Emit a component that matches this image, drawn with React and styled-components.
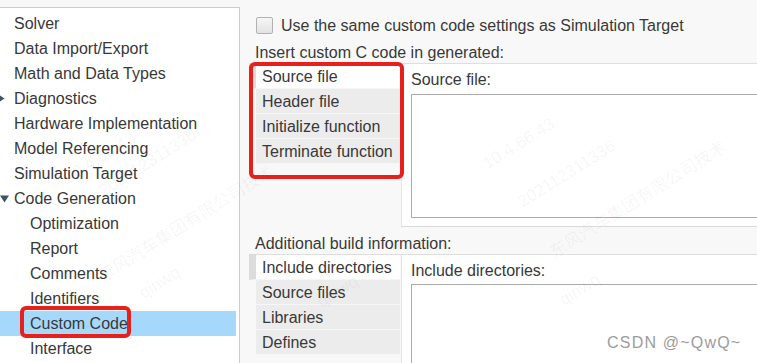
import React from 'react';
import styled, { createGlobalStyle } from 'styled-components';

const Global = createGlobalStyle`
  html, body { margin: 0; padding: 0; }
  body {
    width: 757px; height: 363px; overflow: hidden;
    background: #f8f8f8;
    font-family: "Liberation Sans", Arial, sans-serif;
    font-size: 16px; color: #383838;
  }
`;

const Page = styled.div`
  position: relative;
  display: flex;
  width: 757px;
  height: 363px;
  overflow: hidden;
`;

const Sidebar = styled.nav`
  flex: none;
  width: 236px;
  margin-top: 7px;
  padding: 3px 3px 0 0;
  background: #fff;
  border-top: 1px solid #cdcdcd;
  border-right: 1px solid #cdcdcd;
`;

const TreeRow = styled.div`
  position: relative;
  display: flex;
  align-items: center;
  height: 25px;
  padding-left: ${p => p.$level * 16}px;
  background: ${p => (p.$selected ? '#a6d8fb' : 'transparent')};
  white-space: nowrap;
`;

const ArrowSlot = styled.span`
  flex: none;
  display: flex;
  align-items: center;
  width: 14px;
  height: 25px;
  svg { display: block; margin-left: ${p => (p.$open ? 0 : -3)}px; }
`;

const Annotation = styled.span`
  position: absolute;
  box-sizing: border-box;
  left: ${p => p.$left}px;
  top: ${p => p.$top}px;
  width: ${p => p.$w}px;
  height: ${p => p.$h}px;
  border: 4px solid #e8201c;
  border-radius: 6px;
  pointer-events: none;
`;

const Main = styled.main`
  flex: 1;
  display: flex;
  flex-direction: column;
  min-width: 0;
`;

const CheckRow = styled.label`
  display: flex;
  align-items: center;
  height: 17px;
  margin: 17px 0 0 16px;
  white-space: nowrap;
`;

const CheckBox = styled.span`
  flex: none;
  box-sizing: border-box;
  width: 17px;
  height: 17px;
  margin-right: 8px;
  border: 1px solid #b2b2b2;
  border-radius: 2px;
  background: linear-gradient(#f6f6f6, #e2e2e2);
`;

const SectionLabel = styled.div`
  height: 20px;
  line-height: 20px;
  margin: ${p => p.$mt}px 0 0 15px;
  white-space: nowrap;
`;

const Panel = styled.section`
  position: relative;
  display: flex;
  margin-left: 9px;
  border-top: 1px solid #dedede;
`;

const TabList = styled.div`
  flex: none;
  width: 152px;
`;

const Tab = styled.div`
  box-sizing: border-box;
  width: 151px;
  height: 25px;
  line-height: 25px;
  padding-left: 6px;
  border-left: 7px solid ${p => (p.$active ? '#dcdcdc' : 'transparent')};
  background-clip: padding-box;
  background-color: ${p => (p.$active ? '#fff' : '#ececec')};
  border-bottom: 1px solid #f6f6f6;
  white-space: nowrap;
`;

const Content = styled.div`
  flex: 1;
  box-sizing: border-box;
  height: ${p => p.$h}px;
  padding: 6px 0 0 9px;
  background: #fff;
  border-left: 1px solid #e6e6e6;
  border-bottom: 1px solid #dadada;
  min-width: 0;
`;

const FieldLabel = styled.div`
  height: 20px;
  line-height: 20px;
  white-space: nowrap;
`;

const TextBox = styled.div`
  box-sizing: border-box;
  margin: ${p => p.$mt}px -30px 0 0;
  height: ${p => p.$h}px;
  border: 1px solid #ababab;
  background: #fff;
`;

const Watermark = styled.span`
  position: absolute;
  left: ${p => p.$x}px;
  top: ${p => p.$y}px;
  transform: translate(-50%, -50%) rotate(-32deg);
  font-family: "Liberation Sans", "Noto Sans CJK SC", sans-serif;
  font-size: 17px;
  color: rgba(0, 0, 0, 0.05);
  white-space: nowrap;
  pointer-events: none;
`;

const Credit = styled.span`
  position: absolute;
  left: 607px;
  top: 334px;
  font-size: 16px;
  letter-spacing: 1.2px;
  color: #9c9c9c;
  white-space: nowrap;
`;

const tree = [
  { label: 'Solver', level: 0 },
  { label: 'Data Import/Export', level: 0 },
  { label: 'Math and Data Types', level: 0 },
  { label: 'Diagnostics', level: 0, arrow: 'closed' },
  { label: 'Hardware Implementation', level: 0 },
  { label: 'Model Referencing', level: 0 },
  { label: 'Simulation Target', level: 0 },
  { label: 'Code Generation', level: 0, arrow: 'open' },
  { label: 'Optimization', level: 1 },
  { label: 'Report', level: 1 },
  { label: 'Comments', level: 1 },
  { label: 'Identifiers', level: 1 },
  { label: 'Custom Code', level: 1, selected: true, marked: true },
  { label: 'Interface', level: 1 },
];

const Arrow = ({ open }) => (
  <ArrowSlot $open={open}>
    {open ? (
      <svg width="9" height="8" viewBox="0 0 9 8"><path d="M0 0.5 L9 0.5 L4.5 7.5 Z" fill="#3f5266" /></svg>
    ) : (
      <svg width="8" height="9" viewBox="0 0 8 9"><path d="M0.5 0 L7.5 4.5 L0.5 9 Z" fill="#3f5266" /></svg>
    )}
  </ArrowSlot>
);

const codeTabs = ['Source file', 'Header file', 'Initialize function', 'Terminate function'];
const buildTabs = ['Include directories', 'Source files', 'Libraries', 'Defines'];

const marks = [
  { t: '10.4.66.43', x: 100, y: 158 },
  { t: '202112311336', x: 148, y: 163 },
  { t: '东风汽车集团有限公司技术', x: 185, y: 222 },
  { t: 'qinwq', x: 160, y: 283 },
  { t: 'qinwq', x: 338, y: 292 },
  { t: '10.4.66.43', x: 519, y: 144 },
  { t: '202112311336', x: 567, y: 174 },
  { t: '东风汽车集团有限公司技术', x: 637, y: 198 },
  { t: 'qinwq', x: 580, y: 290 },
];

export default function App() {
  return (
    <Page>
      <Global />
      <Sidebar>
        {tree.map(item => (
          <TreeRow key={item.label} $level={item.level} $selected={item.selected}>
            {item.arrow ? <Arrow open={item.arrow === 'open'} /> : <ArrowSlot />}
            {item.label}
            {item.marked && <Annotation $left={20} $top={-5} $w={111} $h={32} />}
          </TreeRow>
        ))}
      </Sidebar>
      <Main>
        <CheckRow>
          <CheckBox />
          Use the same custom code settings as Simulation Target
        </CheckRow>
        <SectionLabel $mt={9}>Insert custom C code in generated:</SectionLabel>
        <Panel>
          <TabList>
            {codeTabs.map((t, i) => (
              <Tab key={t} $active={i === 0}>{t}</Tab>
            ))}
          </TabList>
          <Content $h={163}>
            <FieldLabel>Source file:</FieldLabel>
            <TextBox $mt={4} $h={124} />
          </Content>
          <Annotation $left={0} $top={-2} $w={155} $h={117} />
        </Panel>
        <SectionLabel $mt={7}>Additional build information:</SectionLabel>
        <Panel>
          <TabList>
            {buildTabs.map((t, i) => (
              <Tab key={t} $active={i === 0}>{t}</Tab>
            ))}
          </TabList>
          <Content $h={200}>
            <FieldLabel>Include directories:</FieldLabel>
            <TextBox $mt={3} $h={160} />
          </Content>
        </Panel>
      </Main>
      {marks.map((m, i) => (
        <Watermark key={i} $x={m.x} $y={m.y}>{m.t}</Watermark>
      ))}
      <Credit>CSDN @~QwQ~</Credit>
    </Page>
  );
}
